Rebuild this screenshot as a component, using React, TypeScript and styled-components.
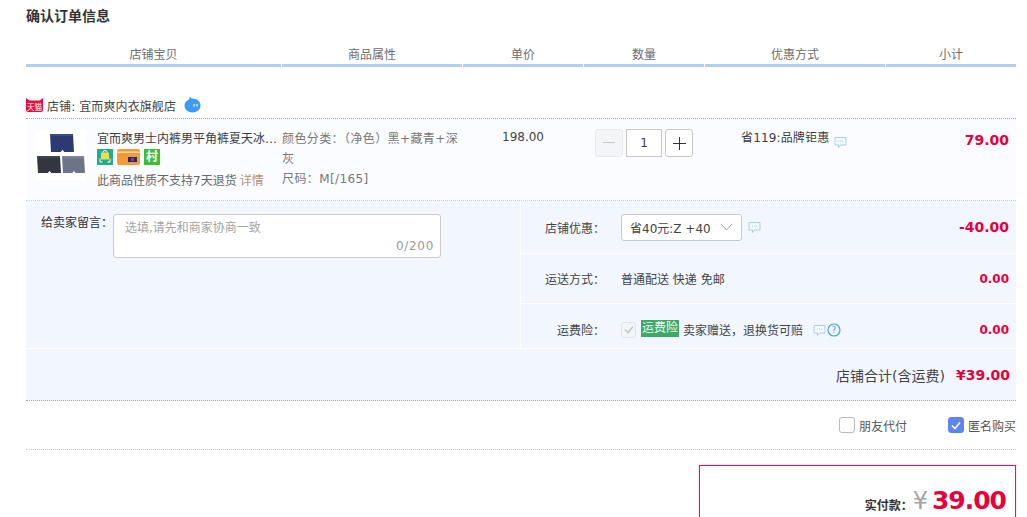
import React from 'react'
import styled, {createGlobalStyle} from 'styled-components'

const RED = '#e6003c'

const Global = createGlobalStyle`
  html, body {
    margin: 0;
    height: 100%;
    overflow: hidden;
    background: #fff;
  }
  body {
    font-family: "DejaVu Sans", "Noto Sans CJK SC", sans-serif;
    font-size: 12px;
    color: #3c3c3c;
  }
`

const Page = styled.div`
  width: 990px;
  padding-left: 26px;
`
const Title = styled.h2`
  margin: 0;
  height: 32px;
  line-height: 32px;
  font-size: 14px;
  font-weight: 700;
  color: #333;
`
const TableGrid = styled.div`
  display: grid;
  grid-template-columns: 255px 180px 120px 120px 180px 130px;
  column-gap: 1px;
`
const Head = styled(TableGrid)`
  margin-top: 14px;
`
const HeadCell = styled.div`
  height: 18px;
  line-height: 18px;
  text-align: center;
  color: #6c6c6c;
  border-bottom: 3px solid #b2cff3;
`
const ShopRow = styled.div`
  display: flex;
  align-items: center;
  height: 18px;
  padding: 29px 0 4px;
  border-bottom: 1px dotted #8fa9c9;
  color: #444;
`
const ShopName = styled.span`
  margin-left: 4px;
  letter-spacing: 0.1px;
`
const Item = styled(TableGrid)`
  height: 81px;
  background: #fbfcff;
  border-bottom: 1px dotted #c9d3de;
`
const ProductCell = styled.div`
  display: flex;
  padding: 11px 0 0 10px;
  min-width: 0;
`
const Thumb = styled.div`
  width: 50px;
  height: 50px;
  background: #fff;
  flex: none;
`
const ProductInfo = styled.div`
  margin-left: 11px;
  min-width: 0;
  flex: 1;
`
const ProductName = styled.div`
  line-height: 18px;
  white-space: nowrap;
`
const Badges = styled.div`
  display: flex;
  gap: 4px;
  height: 17px;
  margin-top: 1px;
`
const Notice = styled.div`
  margin-top: 6px;
  line-height: 18px;
  color: #666;
  white-space: nowrap;
`
const Detail = styled.span`
  margin-left: 3px;
  color: #b98e6e;
`
const Props = styled.div`
  padding-top: 10px;
  line-height: 20px;
  letter-spacing: 0.4px;
  color: #777;
`
const Price = styled.div`
  padding-top: 9px;
  line-height: 18px;
  text-align: center;
  color: #444;
`
const Stepper = styled.div`
  display: flex;
  justify-content: center;
  gap: 2px;
  padding-top: 10px;
`
const StepBtn = styled.div<{ $off?: boolean }>`
  width: 26px;
  height: 26px;
  display: flex;
  align-items: center;
  justify-content: center;
  border: 1px solid ${p => p.$off ? '#e6e9ee' : '#c8c8c8'};
  border-radius: 3px;
  background: ${p => p.$off ? '#f4f5f7' : '#fff'};
`
const Qty = styled.div`
  width: 34px;
  height: 26px;
  line-height: 26px;
  margin: 0 1px;
  text-align: center;
  border: 1px solid #c8c8c8;
  background: #fff;
`
const Promo = styled.div`
  display: flex;
  align-items: flex-start;
  padding: 10px 0 0 36px;
  line-height: 18px;
  letter-spacing: 0.15px;
  gap: 5px;
`
const Subtotal = styled.div`
  padding: 11px 7px 0 0;
  text-align: right;
  line-height: 20px;
  font-size: 14px;
  font-weight: 700;
  color: ${RED};
`
const Extras = styled.div`
  display: grid;
  grid-template-columns: 494px 495px;
  column-gap: 1px;
`
const Memo = styled.div`
  display: flex;
  background: #f2f7ff;
  padding: 13px 0 0 15px;
  border-bottom: 1px solid #fff;
`
const MemoLabel = styled.label`
  line-height: 17px;
  padding-top: 1px;
  color: #333;
  white-space: nowrap;
`
const MemoBox = styled.div`
  position: relative;
  height: 44px;
`
const MemoInput = styled.textarea`
  display: block;
  box-sizing: border-box;
  width: 328px;
  height: 44px;
  padding: 3px 11px;
  border: 1px solid #c9cbce;
  border-radius: 3px;
  resize: none;
  outline: none;
  font: inherit;
  background: #fff;
  &::placeholder {
    color: #a3a3a3;
    opacity: 1;
  }
`
const Counter = styled.span`
  position: absolute;
  right: 7px;
  bottom: 5px;
  letter-spacing: 0.7px;
  color: #999;
`
const Options = styled.div`
  display: flex;
  flex-direction: column;
`
const OptionRow = styled.div<{ $h: number, $top?: number }>`
  display: flex;
  align-items: center;
  box-sizing: border-box;
  height: ${p => p.$h}px;
  background: #f2f7ff;
  border-bottom: 1px solid #fff;
  padding: ${p => p.$top || 0}px 7px 0 0;
`
const OptionLabel = styled.div`
  width: 84px;
  flex: none;
  text-align: right;
  color: #444;
`
const OptionValue = styled.div`
  display: flex;
  align-items: center;
  flex: 1;
  margin-left: 16px;
  color: #444;
`
const Select = styled.div`
  display: flex;
  align-items: center;
  justify-content: space-between;
  box-sizing: border-box;
  width: 121px;
  height: 27px;
  padding: 0 8px;
  margin-right: 6px;
  border: 1px solid #c6c9ce;
  border-radius: 3px;
  background: #fff;
  color: #444;
`
const Amount = styled.div<{ $big?: boolean }>`
  font-size: ${p => p.$big ? 14 : 12}px;
  font-weight: 700;
  color: ${RED};
`
const Fake = styled.span`
  display: flex;
  align-items: center;
  justify-content: center;
  box-sizing: border-box;
  width: 15px;
  height: 16px;
  border: 1px solid #e2e4e8;
  border-radius: 3px;
  background: #f4f5f7;
`
const Tag = styled.span`
  box-sizing: border-box;
  margin: -2px 0 0 5px;
  padding-left: 1px;
  width: 38px;
  height: 17px;
  line-height: 17px;
  background: #3fa768;
  color: #e8fff0;
  white-space: nowrap;
`
const TagNote = styled.span`
  margin-left: 4px;
  margin-right: 10px;
`
const Total = styled.div`
  display: flex;
  align-items: center;
  justify-content: flex-end;
  gap: 11px;
  height: 51px;
  padding-right: 6px;
  background: #f2f7ff;
  border-bottom: 1px dotted #8fa9c9;
  font-size: 13px;
  color: #444;
`
const TotalLabel = styled.span`
  font-size: 14px;
`
const TotalNum = styled.b`
  font-size: 14px;
  color: ${RED};
`
const Extra = styled.div`
  display: flex;
  align-items: center;
  justify-content: flex-end;
  gap: 41px;
  height: 48px;
  border-bottom: 1px dotted #ccc;
`
const Check = styled.label`
  display: flex;
  align-items: center;
  gap: 4px;
  color: #555;
`
const Box = styled.span<{ $on?: boolean }>`
  display: flex;
  align-items: center;
  justify-content: center;
  box-sizing: border-box;
  width: 16px;
  height: 16px;
  border-radius: 3px;
  border: 1px solid ${p => p.$on ? '#5b86f2' : '#b9b9b9'};
  background: ${p => p.$on ? '#5b86f2' : '#fff'};
`
const PayBox = styled.div`
  box-sizing: border-box;
  display: flex;
  align-items: center;
  justify-content: flex-end;
  width: 317px;
  height: 90px;
  margin: 15px 0 0 auto;
  padding: 0 9px 19px 0;
  border: 1px solid #e8124e;
  box-shadow: 0 0 2px rgba(240, 40, 100, 0.35);
`
const PayLabel = styled.span`
  font-weight: 700;
  color: #333;
  margin-top: 7px;
`
const Yen = styled.span`
  margin: 0 4px 0 0;
  font-size: 24px;
  line-height: 28px;
  color: #a5a5a5;
`
const PayNum = styled.span`
  font-size: 25px;
  line-height: 28px;
  letter-spacing: -1px;
  font-weight: 700;
  color: ${RED};
`
const BubbleIcon = styled.svg<{ $top: number }>`
  flex: none;
  margin-top: ${p => p.$top}px;
`

const Bubble = ({top = 0}: { top?: number }) => (
    <BubbleIcon $top={top} width="13" height="13" viewBox="0 0 13 13" fill="none">
        <path d="M1 1.5h11v7.5H6.5L4.5 11.5V9H1z" stroke="#a9cdea" strokeWidth="1" fill="#f4f9ff"/>
        <path d="M4 5.2h1M6 5.2h1M8 5.2h1" stroke="#a9cdea" strokeWidth="1"/>
    </BubbleIcon>
)

const Tmall = () => (
    <svg width="17" height="14" viewBox="0 0 17 14">
        <path d="M0 0l3.5 2.5h10L17 0v12a2 2 0 0 1-2 2H2a2 2 0 0 1-2-2z" fill="#e5103f"/>
        <text x="8.5" y="11.5" fontSize="7.5" textAnchor="middle" fill="#fff">天猫</text>
    </svg>
)

const WangWangIcon = styled.svg`
  margin: -2px 0 0 8px;
`

const WangWang = () => (
    <WangWangIcon width="17" height="17" viewBox="0 0 17 17">
        <path d="M6 0.5 C6.5 2 8 2.6 9.5 2.8 C13.5 3 16.5 5.6 16.5 9.5 C16.5 13.5 13 16.5 8.5 16.5 C4 16.5 0.5 13.5 0.5 9.5 C0.5 6.8 2.2 4.6 5 3.4z" fill="#3c9cf2"/>
        <path d="M10 8v2.5M13 8v2.5" stroke="#fff" strokeWidth="1.2"/>
    </WangWangIcon>
)

const Pants = ({x, y, w, h, color, band}: { x: number, y: number, w: number, h: number, color: string, band: string }) => (
    <g>
        <path d={`M${x} ${y}h${w}l1 ${h}h${-w * 0.42}l${-w * 0.08} ${-h * 0.12}l${-w * 0.08} ${h * 0.12}h${-w * 0.42}z`}
              fill={color}/>
        <rect x={x} y={y} width={w} height="2" fill={band}/>
    </g>
)

const ThumbArt = () => (
    <svg width="50" height="50" viewBox="0 0 50 50" style={{display: 'block'}}>
        <Pants x={14} y={4} w={23} h={18} color="#2b3a72" band="#3a4a86"/>
        <Pants x={1} y={26} w={23} h={17} color="#33353f" band="#44464f"/>
        <Pants x={26} y={26} w={22} h={17} color="#6d7488" band="#7d8498"/>
    </svg>
)

const GiftBadge = () => (
    <svg width="16" height="16" viewBox="0 0 16 16">
        <rect width="16" height="16" fill="#21ad8c"/>
        <rect x="4" y="3.5" width="8" height="7" rx="1" fill="#f3dc4b"/>
        <path d="M6 3.5a2 2 0 0 1 4 0" stroke="#fff" fill="none"/>
        <path d="M3 9.5v3.5h2.5M13 9.5v3.5h-2.5" stroke="#fff" fill="none"/>
    </svg>
)

const CardBadge = () => (
    <svg width="23" height="16" viewBox="0 0 23 16">
        <rect width="23" height="16" rx="2" fill="#f49b31"/>
        <rect y="2.5" width="23" height="1.5" fill="#fbd9a5"/>
        <rect x="11" y="8" width="9" height="5" fill="#1b2a7a"/>
        <rect x="14" y="9" width="3" height="3" fill="#e5203f"/>
    </svg>
)

const VillageBadge = styled.span`
  width: 16px;
  height: 16px;
  line-height: 16px;
  text-align: center;
  font-size: 12px;
  font-weight: 700;
  color: #fff;
  background: #3fbf35;
`

const Tick = ({color}: { color: string }) => (
    <svg width="10" height="9" viewBox="0 0 10 9">
        <path d="M1 4.5l3 3 5-6" stroke={color} strokeWidth="1.6" fill="none"/>
    </svg>
)

const HelpIcon = styled.svg`
  margin: 1px 0 0 1px;
`

const Help = () => (
    <HelpIcon width="14" height="14" viewBox="0 0 14 14">
        <circle cx="7" cy="7" r="6" stroke="#4d9fe0" fill="none" strokeWidth="1.2"/>
        <text x="7" y="10.2" fontSize="9" textAnchor="middle" fill="#4d9fe0">?</text>
    </HelpIcon>
)

const heads = ['店铺宝贝', '商品属性', '单价', '数量', '优惠方式', '小计']

export default function App() {
    return (
        <Page>
            <Global/>
            <Title>确认订单信息</Title>
            <Head>
                {heads.map(h => <HeadCell key={h}>{h}</HeadCell>)}
            </Head>
            <ShopRow>
                <Tmall/>
                <ShopName>店铺: 宜而爽内衣旗舰店</ShopName>
                <WangWang/>
            </ShopRow>
            <Item>
                <ProductCell>
                    <Thumb><ThumbArt/></Thumb>
                    <ProductInfo>
                        <ProductName>宜而爽男士内裤男平角裤夏天冰…</ProductName>
                        <Badges>
                            <GiftBadge/>
                            <CardBadge/>
                            <VillageBadge>村</VillageBadge>
                        </Badges>
                        <Notice>此商品性质不支持7天退货<Detail>详情</Detail></Notice>
                    </ProductInfo>
                </ProductCell>
                <Props>
                    颜色分类：（净色）黑+藏青+深灰
                    <br/>
                    尺码：M[/165]
                </Props>
                <Price>198.00</Price>
                <Stepper>
                    <StepBtn $off>
                        <svg width="12" height="2"><rect width="12" height="1" fill="#c4c8ce"/></svg>
                    </StepBtn>
                    <Qty>1</Qty>
                    <StepBtn>
                        <svg width="13" height="13"><path d="M0 6.5h13M6.5 0v13" stroke="#333"/></svg>
                    </StepBtn>
                </Stepper>
                <Promo>省119:品牌钜惠<Bubble top={7}/></Promo>
                <Subtotal>79.00</Subtotal>
            </Item>
            <Extras>
                <Memo>
                    <MemoLabel>给卖家留言：</MemoLabel>
                    <MemoBox>
                        <MemoInput placeholder="选填,请先和商家协商一致"/>
                        <Counter>0/200</Counter>
                    </MemoBox>
                </Memo>
                <Options>
                    <OptionRow $h={53}>
                        <OptionLabel>店铺优惠：</OptionLabel>
                        <OptionValue>
                            <Select>
                                省40元:Z +40
                                <svg width="13" height="8" viewBox="0 0 13 8">
                                    <path d="M1 1l5.5 6L12 1" stroke="#9a9ea4" fill="none"/>
                                </svg>
                            </Select>
                            <Bubble/>
                        </OptionValue>
                        <Amount $big>-40.00</Amount>
                    </OptionRow>
                    <OptionRow $h={50}>
                        <OptionLabel>运送方式：</OptionLabel>
                        <OptionValue>普通配送 快递 免邮</OptionValue>
                        <Amount>0.00</Amount>
                    </OptionRow>
                    <OptionRow $h={45} $top={7}>
                        <OptionLabel>运费险：</OptionLabel>
                        <OptionValue>
                            <Fake><Tick color="#c3c6cb"/></Fake>
                            <Tag>运费险</Tag>
                            <TagNote>卖家赠送，退换货可赔</TagNote>
                            <Bubble top={2}/>
                            <Help/>
                        </OptionValue>
                        <Amount>0.00</Amount>
                    </OptionRow>
                </Options>
            </Extras>
            <Total>
                <TotalLabel>店铺合计(含运费)</TotalLabel>
                <TotalNum>¥39.00</TotalNum>
            </Total>
            <Extra>
                <Check><Box/>朋友代付</Check>
                <Check><Box $on><Tick color="#fff"/></Box>匿名购买</Check>
            </Extra>
            <PayBox>
                <PayLabel>实付款：</PayLabel>
                <Yen>¥</Yen>
                <PayNum>39.00</PayNum>
            </PayBox>
        </Page>
    )
}
